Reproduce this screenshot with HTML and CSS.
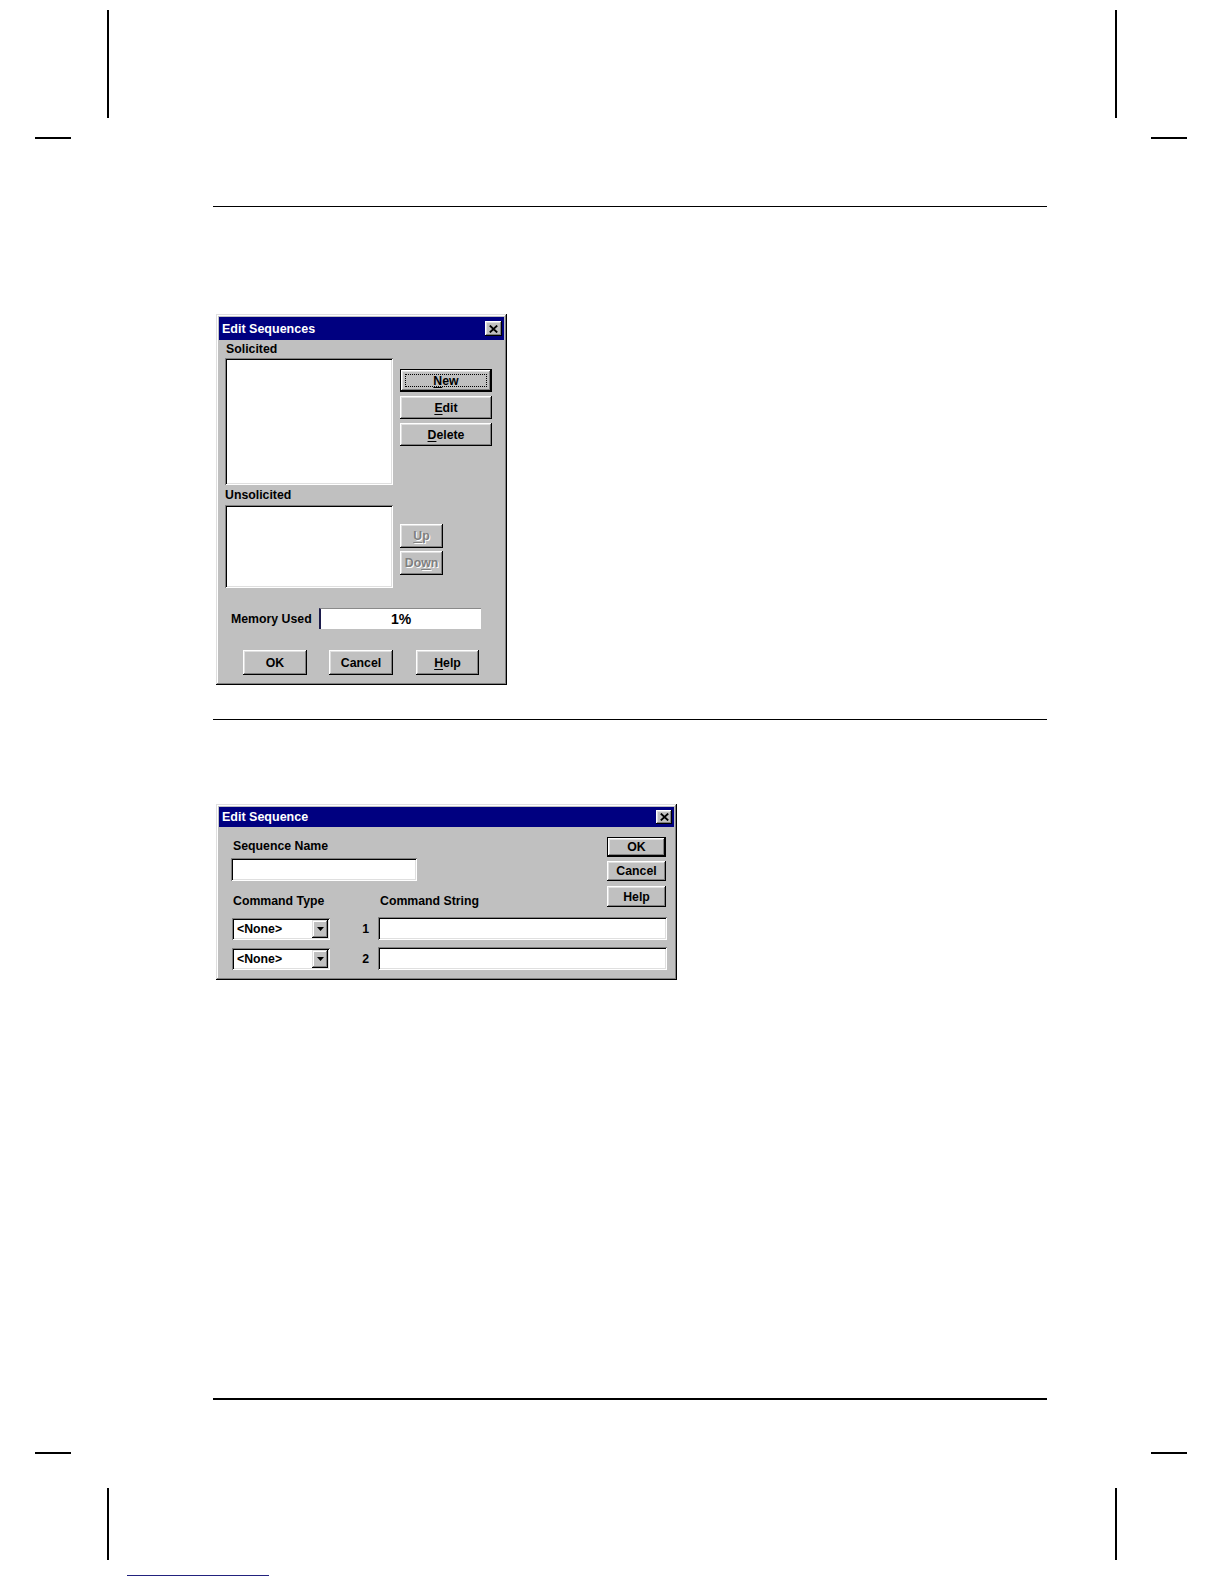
FILE: index.html
```html
<!DOCTYPE html>
<html lang="en">
<head>
<meta charset="utf-8">
<title>Edit Sequences</title>
<link rel="stylesheet" href="styles.css">
</head>
<body>
<div class="page">
  <div class="mark v tl"></div>
  <div class="mark h tlh"></div>
  <div class="mark v tr"></div>
  <div class="mark h trh"></div>
  <div class="mark h blh"></div>
  <div class="mark v bl"></div>
  <div class="mark h brh"></div>
  <div class="mark v br"></div>
  <div class="blueline"></div>

  <main class="content">
    <div class="rule rule1"></div>

    <section class="dialog dlg1">
      <div class="titlebar tb1">
        <span class="title">Edit Sequences</span>
        <span class="close close1"><svg width="9" height="8" viewBox="0 0 9 8"><path d="M0.8 0.6 L8.2 7.4 M8.2 0.6 L0.8 7.4" stroke="#000" stroke-width="1.9" fill="none"/></svg></span>
      </div>
      <div class="body1">
        <div class="lists">
          <div class="label lab-sol">Solicited</div>
          <div class="listbox lb1"></div>
          <div class="btncol bc1">
            <div class="btn default b-wide"><span class="focus"><u>N</u>ew</span></div>
            <div class="btn b-wide"><u>E</u>dit</div>
            <div class="btn b-wide"><u>D</u>elete</div>
          </div>
          <div class="label lab-unsol">Unsolicited</div>
          <div class="listbox lb2"></div>
          <div class="btncol bc2">
            <div class="btn disabled b-small"><u>U</u>p</div>
            <div class="btn disabled b-small">Do<u>w</u>n</div>
          </div>
        </div>
        <div class="memrow">
          <span class="memlabel">Memory Used</span>
          <div class="memfield">1%</div>
        </div>
        <div class="btnrow">
          <div class="btn b-bottom">OK</div>
          <div class="btn b-bottom">Cancel</div>
          <div class="btn b-bottom b-help"><u>H</u>elp</div>
        </div>
      </div>
    </section>

    <div class="rule rule2"></div>

    <section class="dialog dlg2">
      <div class="titlebar tb2">
        <span class="title">Edit Sequence</span>
        <span class="close close2"><svg width="9" height="8" viewBox="0 0 9 8"><path d="M0.8 0.6 L8.2 7.4 M8.2 0.6 L0.8 7.4" stroke="#000" stroke-width="1.9" fill="none"/></svg></span>
      </div>
      <div class="body2">
        <div class="top2">
          <div class="form2">
            <div class="label2 lab-name">Sequence Name</div>
            <div class="field namefield"></div>
            <div class="headrow">
              <span class="label2 head-type">Command Type</span>
              <span class="label2 head-str">Command String</span>
            </div>
          </div>
          <div class="btncol2">
            <div class="btn default b2 b-ok">OK</div>
            <div class="btn b2 b-cancel">Cancel</div>
            <div class="btn b2 b-help2">Help</div>
          </div>
        </div>
        <div class="cmdrow">
          <div class="combo"><span class="combotext">&lt;None&gt;</span><span class="dropbtn"><svg width="7" height="4" viewBox="0 0 7 4"><polygon points="0,0 7,0 3.5,4" fill="#000"/></svg></span></div>
          <span class="num">1</span>
          <div class="field cmdfield"></div>
        </div>
        <div class="cmdrow row2">
          <div class="combo"><span class="combotext">&lt;None&gt;</span><span class="dropbtn"><svg width="7" height="4" viewBox="0 0 7 4"><polygon points="0,0 7,0 3.5,4" fill="#000"/></svg></span></div>
          <span class="num">2</span>
          <div class="field cmdfield"></div>
        </div>
      </div>
    </section>

    <div class="rule rule3"></div>
  </main>
</div>
</body>
</html>
```

FILE: styles.css
```css
html, body {
  margin: 0;
  padding: 0;
  background: #ffffff;
}

body {
  font-family: "Liberation Sans", Arial, sans-serif;
  font-size: 12px;
  color: #000;
}

.page {
  position: relative;
  width: 1224px;
  height: 1584px;
  overflow: hidden;
}

/* printer crop marks */
.mark {
  position: absolute;
  background: #000;
}
.mark.v { width: 2px; }
.mark.h { height: 2px; }
.tl { left: 107px; top: 10px; height: 108px; }
.tr { left: 1115px; top: 10px; height: 108px; }
.tlh { left: 35px; top: 137px; width: 36px; }
.trh { left: 1151px; top: 137px; width: 36px; }
.blh { left: 35px; top: 1452px; width: 36px; }
.brh { left: 1151px; top: 1452px; width: 36px; }
.bl { left: 107px; top: 1488px; height: 72px; }
.br { left: 1115px; top: 1488px; height: 72px; }

.blueline {
  position: absolute;
  left: 127px;
  top: 1575px;
  width: 142px;
  height: 1px;
  background: #22227e;
}

/* main flow */
.content {
  padding-top: 206px;
  margin-left: 213px;
  width: 834px;
}

.rule {
  height: 1px;
  background: #000;
}
.rule2 { margin-top: 34px; }
.rule3 { margin-top: 418px; height: 2px; }

/* dialogs */
.dialog {
  margin-left: 3px;
  background: #c0c0c0;
  padding: 3px;
  box-sizing: border-box;
  box-shadow:
    inset -1px -1px 0 #000,
    inset 1px 1px 0 #dfdfdf,
    inset -2px -2px 0 #808080,
    inset 2px 2px 0 #fff;
}

.dlg1 {
  width: 291px;
  margin-top: 107px;
}

.dlg2 {
  width: 461px;
  margin-top: 84px;
}

.titlebar {
  background: #000080;
  display: flex;
  align-items: center;
  justify-content: space-between;
  padding: 0 2px 0 3px;
}
.tb1 { height: 23px; }
.tb2 { height: 20px; }

.title {
  color: #fff;
  font-weight: bold;
  font-size: 12.5px;
}

.close {
  display: flex;
  align-items: center;
  justify-content: center;
  background: #c0c0c0;
  box-shadow:
    inset -1px -1px 0 #000,
    inset 1px 1px 0 #fff,
    inset -2px -2px 0 #808080,
    inset 2px 2px 0 #dfdfdf;
}
.close1 { width: 17px; height: 15px; }
.close2 { width: 16px; height: 14px; }

/* generic 3D button */
.btn {
  display: flex;
  align-items: center;
  justify-content: center;
  box-sizing: border-box;
  background: #c0c0c0;
  font-weight: bold;
  font-size: 12.3px;
  box-shadow:
    inset -1px -1px 0 #000,
    inset 1px 1px 0 #fff,
    inset -2px -2px 0 #808080,
    inset 2px 2px 0 #dfdfdf;
}
.btn u {
  text-decoration: underline;
  text-underline-offset: 2px;
}
.btn.default {
  border: 1px solid #000;
}
.btn .focus {
  display: flex;
  align-items: center;
  justify-content: center;
  width: calc(100% - 8px);
  height: calc(100% - 8px);
  box-sizing: border-box;
  border: 1px dotted #000;
}
.btn.disabled {
  color: #808080;
  text-shadow: 1px 1px 0 #fff;
}

/* Edit Sequences body */
.body1 {
  padding: 0 6px 7px 6px;
}

.lists {
  display: grid;
  grid-template-columns: 168px 92px;
  grid-template-rows: 18px 127px 20px 83px;
  column-gap: 7px;
}

.label {
  font-weight: bold;
  font-size: 12.3px;
}
.lab-sol {
  grid-column: 1;
  grid-row: 1;
  line-height: 18px;
  padding-left: 1px;
}
.lab-unsol {
  grid-column: 1;
  grid-row: 3;
  line-height: 20px;
}

.listbox {
  background: #fff;
  box-shadow:
    inset 1px 1px 0 #808080,
    inset -1px -1px 0 #fff,
    inset 2px 2px 0 #000,
    inset -2px -2px 0 #dfdfdf;
}
.lb1 { grid-column: 1; grid-row: 2; }
.lb2 { grid-column: 1; grid-row: 4; }

.btncol {
  display: flex;
  flex-direction: column;
  gap: 4px;
}
.bc1 {
  grid-column: 2;
  grid-row: 2;
  padding-top: 11px;
}
.bc2 {
  grid-column: 2;
  grid-row: 4;
  padding-top: 19px;
  gap: 3px;
}

.b-wide { width: 92px; height: 23px; }
.b-small { width: 43px; height: 24px; }

.memrow {
  display: flex;
  align-items: center;
  margin-top: 20px;
  padding-left: 6px;
  height: 21px;
}
.memlabel {
  width: 88px;
  font-weight: bold;
  font-size: 12.3px;
}
.memfield {
  width: 162px;
  height: 21px;
  box-sizing: border-box;
  background: #fff;
  border-top: 1px solid #8a8a8a;
  border-left: 2px solid #1c1c4c;
  display: flex;
  align-items: center;
  justify-content: center;
  font-weight: bold;
  font-size: 14px;
}

.btnrow {
  display: flex;
  gap: 22px;
  margin-top: 21px;
  padding-left: 18px;
}
.b-bottom { width: 64px; height: 25px; }
.b-help { width: 63px; margin-left: 1px; }

/* Edit Sequence body */
.body2 {
  padding: 10px 0 7px 12px;
}

.top2 {
  display: flex;
  justify-content: space-between;
  height: 72px;
}

.form2 {
  display: flex;
  flex-direction: column;
}

.label2 {
  font-weight: bold;
  font-size: 12.3px;
  line-height: 16px;
}
.lab-name {
  margin-top: 1px;
  padding-left: 2px;
}

.field {
  background: #fff;
  box-sizing: border-box;
  box-shadow:
    inset 1px 1px 0 #808080,
    inset -1px -1px 0 #fff,
    inset 2px 2px 0 #000,
    inset -2px -2px 0 #dfdfdf;
}
.namefield {
  width: 186px;
  height: 23px;
  margin-top: 4px;
}

.headrow {
  display: flex;
  margin-top: 12px;
}
.head-type {
  width: 147px;
  padding-left: 2px;
}

.btncol2 {
  display: flex;
  flex-direction: column;
  width: 59px;
  margin-right: 8px;
}
.b2 { width: 59px; height: 20px; }
.b-cancel { margin-top: 4px; }
.b-help2 { margin-top: 5px; height: 21px; }

.cmdrow {
  display: flex;
  align-items: center;
  margin-top: 8px;
  height: 23px;
}
.row2 { margin-top: 7px; }

.combo {
  margin-left: 1px;
  width: 98px;
  height: 22px;
  box-sizing: border-box;
  background: #fff;
  display: flex;
  align-items: center;
  justify-content: space-between;
  padding: 2px 2px 2px 5px;
  box-shadow:
    inset 1px 1px 0 #808080,
    inset -1px -1px 0 #fff,
    inset 2px 2px 0 #000,
    inset -2px -2px 0 #dfdfdf;
}
.combotext {
  font-weight: bold;
  font-size: 12.3px;
}
.dropbtn {
  width: 16px;
  height: 18px;
  display: flex;
  align-items: center;
  justify-content: center;
  background: #c0c0c0;
  box-shadow:
    inset -1px -1px 0 #000,
    inset 1px 1px 0 #dfdfdf,
    inset -2px -2px 0 #808080,
    inset 2px 2px 0 #fff;
}

.num {
  width: 48px;
  box-sizing: border-box;
  text-align: right;
  padding-right: 9px;
  font-weight: bold;
  font-size: 12.3px;
}

.cmdfield {
  width: 289px;
  height: 23px;
}
```
